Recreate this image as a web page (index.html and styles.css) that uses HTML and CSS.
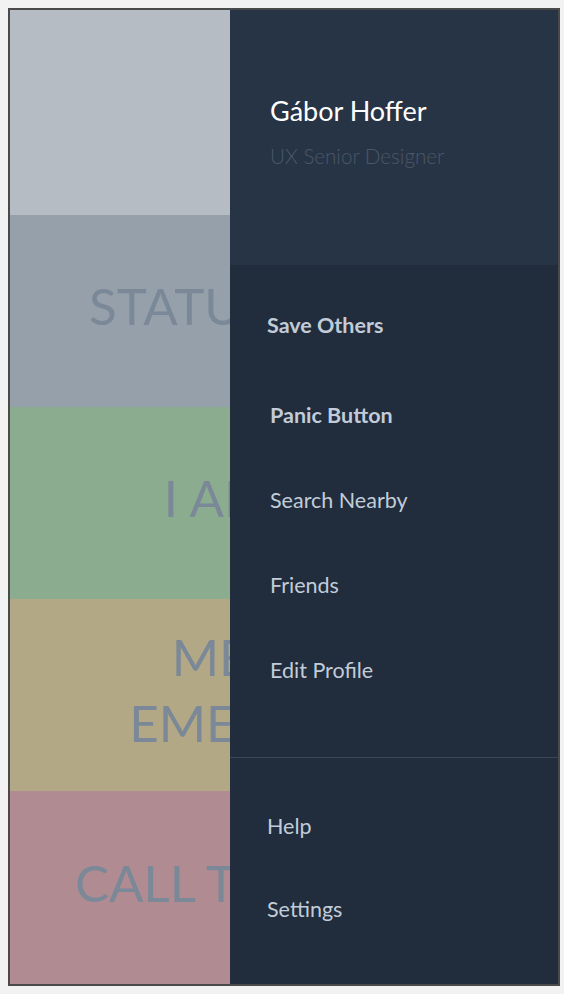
FILE: index.html
```html
<!DOCTYPE html>
<html lang="en">
<head>
<meta charset="utf-8">
<title>Menu</title>
<link rel="stylesheet" href="styles.css">
</head>
<body>
<div class="phone">
  <div class="screens-clip">
    <div class="screens">
      <div class="tile tile-top"></div>
      <div class="tile tile-status"><span class="tile-label">STATUS UPDATE</span></div>
      <div class="tile tile-safe"><span class="tile-label">I AM SAFE</span></div>
      <div class="tile tile-medical"><span class="tile-label">MEDICAL<br>EMERGENCY</span></div>
      <div class="tile tile-call"><span class="tile-label">CALL THE POLICE</span></div>
    </div>
  </div>
  <nav class="drawer">
    <header class="profile">
      <div class="profile-name">Gábor Hoffer</div>
      <div class="profile-role">UX Senior Designer</div>
    </header>
    <div class="menu">
      <ul class="menu-main">
        <li class="item item-bold item-section">Save Others</li>
        <li class="item item-bold item-gap">Panic Button</li>
        <li class="item">Search Nearby</li>
        <li class="item">Friends</li>
        <li class="item">Edit Profile</li>
      </ul>
      <ul class="menu-footer">
        <li class="item item-foot">Help</li>
        <li class="item item-foot">Settings</li>
      </ul>
    </div>
  </nav>
</div>
</body>
</html>
```
FILE: styles.css
```css
* { box-sizing: border-box; }
html, body { margin: 0; padding: 0; }
body {
  background: #f2f2f2;
  padding: 8px;
  font-family: "Lato", "Noto Sans", sans-serif;
}
.phone {
  display: flex;
  width: 552px;
  height: 978px;
  border: 2px solid #4a4a4a;
  overflow: hidden;
}
.screens-clip {
  width: 220px;
  flex: none;
  overflow: hidden;
}
.screens {
  display: flex;
  flex-direction: column;
  width: 548px;
  height: 100%;
}
.tile {
  height: 192px;
  flex: none;
  display: flex;
  align-items: center;
  justify-content: center;
  text-align: center;
  padding-bottom: 10px;
}
.tile-top { height: 205px; background: #b5bcc4; }
.tile-status { background: #95a0aa; }
.tile-safe { background: #8cac8f; }
.tile-medical { background: #b2a886; }
.tile-call { background: #b08b92; flex: 1; }
.tile-label {
  font-size: 51px;
  line-height: 66px;
  color: #7b8898;
  white-space: nowrap;
}
.drawer {
  width: 328px;
  flex: none;
  display: flex;
  flex-direction: column;
}
.profile {
  height: 255px;
  flex: none;
  background: #273445;
  padding: 85px 0 0 40px;
}
.profile-name {
  font-size: 27px;
  line-height: 32px;
  color: #ffffff;
}
.profile-role {
  margin-top: 16px;
  font-size: 20.6px;
  line-height: 26px;
  font-weight: 300;
  color: #4b5768;
}
.menu {
  flex: 1;
  background: #212d3d;
  display: flex;
  flex-direction: column;
}
.menu ul { list-style: none; margin: 0; }
.menu-main {
  height: 493px;
  padding: 18px 0 0 0;
  border-bottom: 1px solid #3a4656;
}
.menu-footer {
  padding: 27px 0 0 0;
}
.item {
  height: 85px;
  line-height: 85px;
  padding-left: 40px;
  font-size: 21.5px;
  color: #c1ccd8;
}
.item-bold { font-weight: 700; }
.item-section { padding-left: 37px; }
.item-gap { margin-top: 5px; }
.item-foot { height: 83px; line-height: 83px; padding-left: 37px; }
```
